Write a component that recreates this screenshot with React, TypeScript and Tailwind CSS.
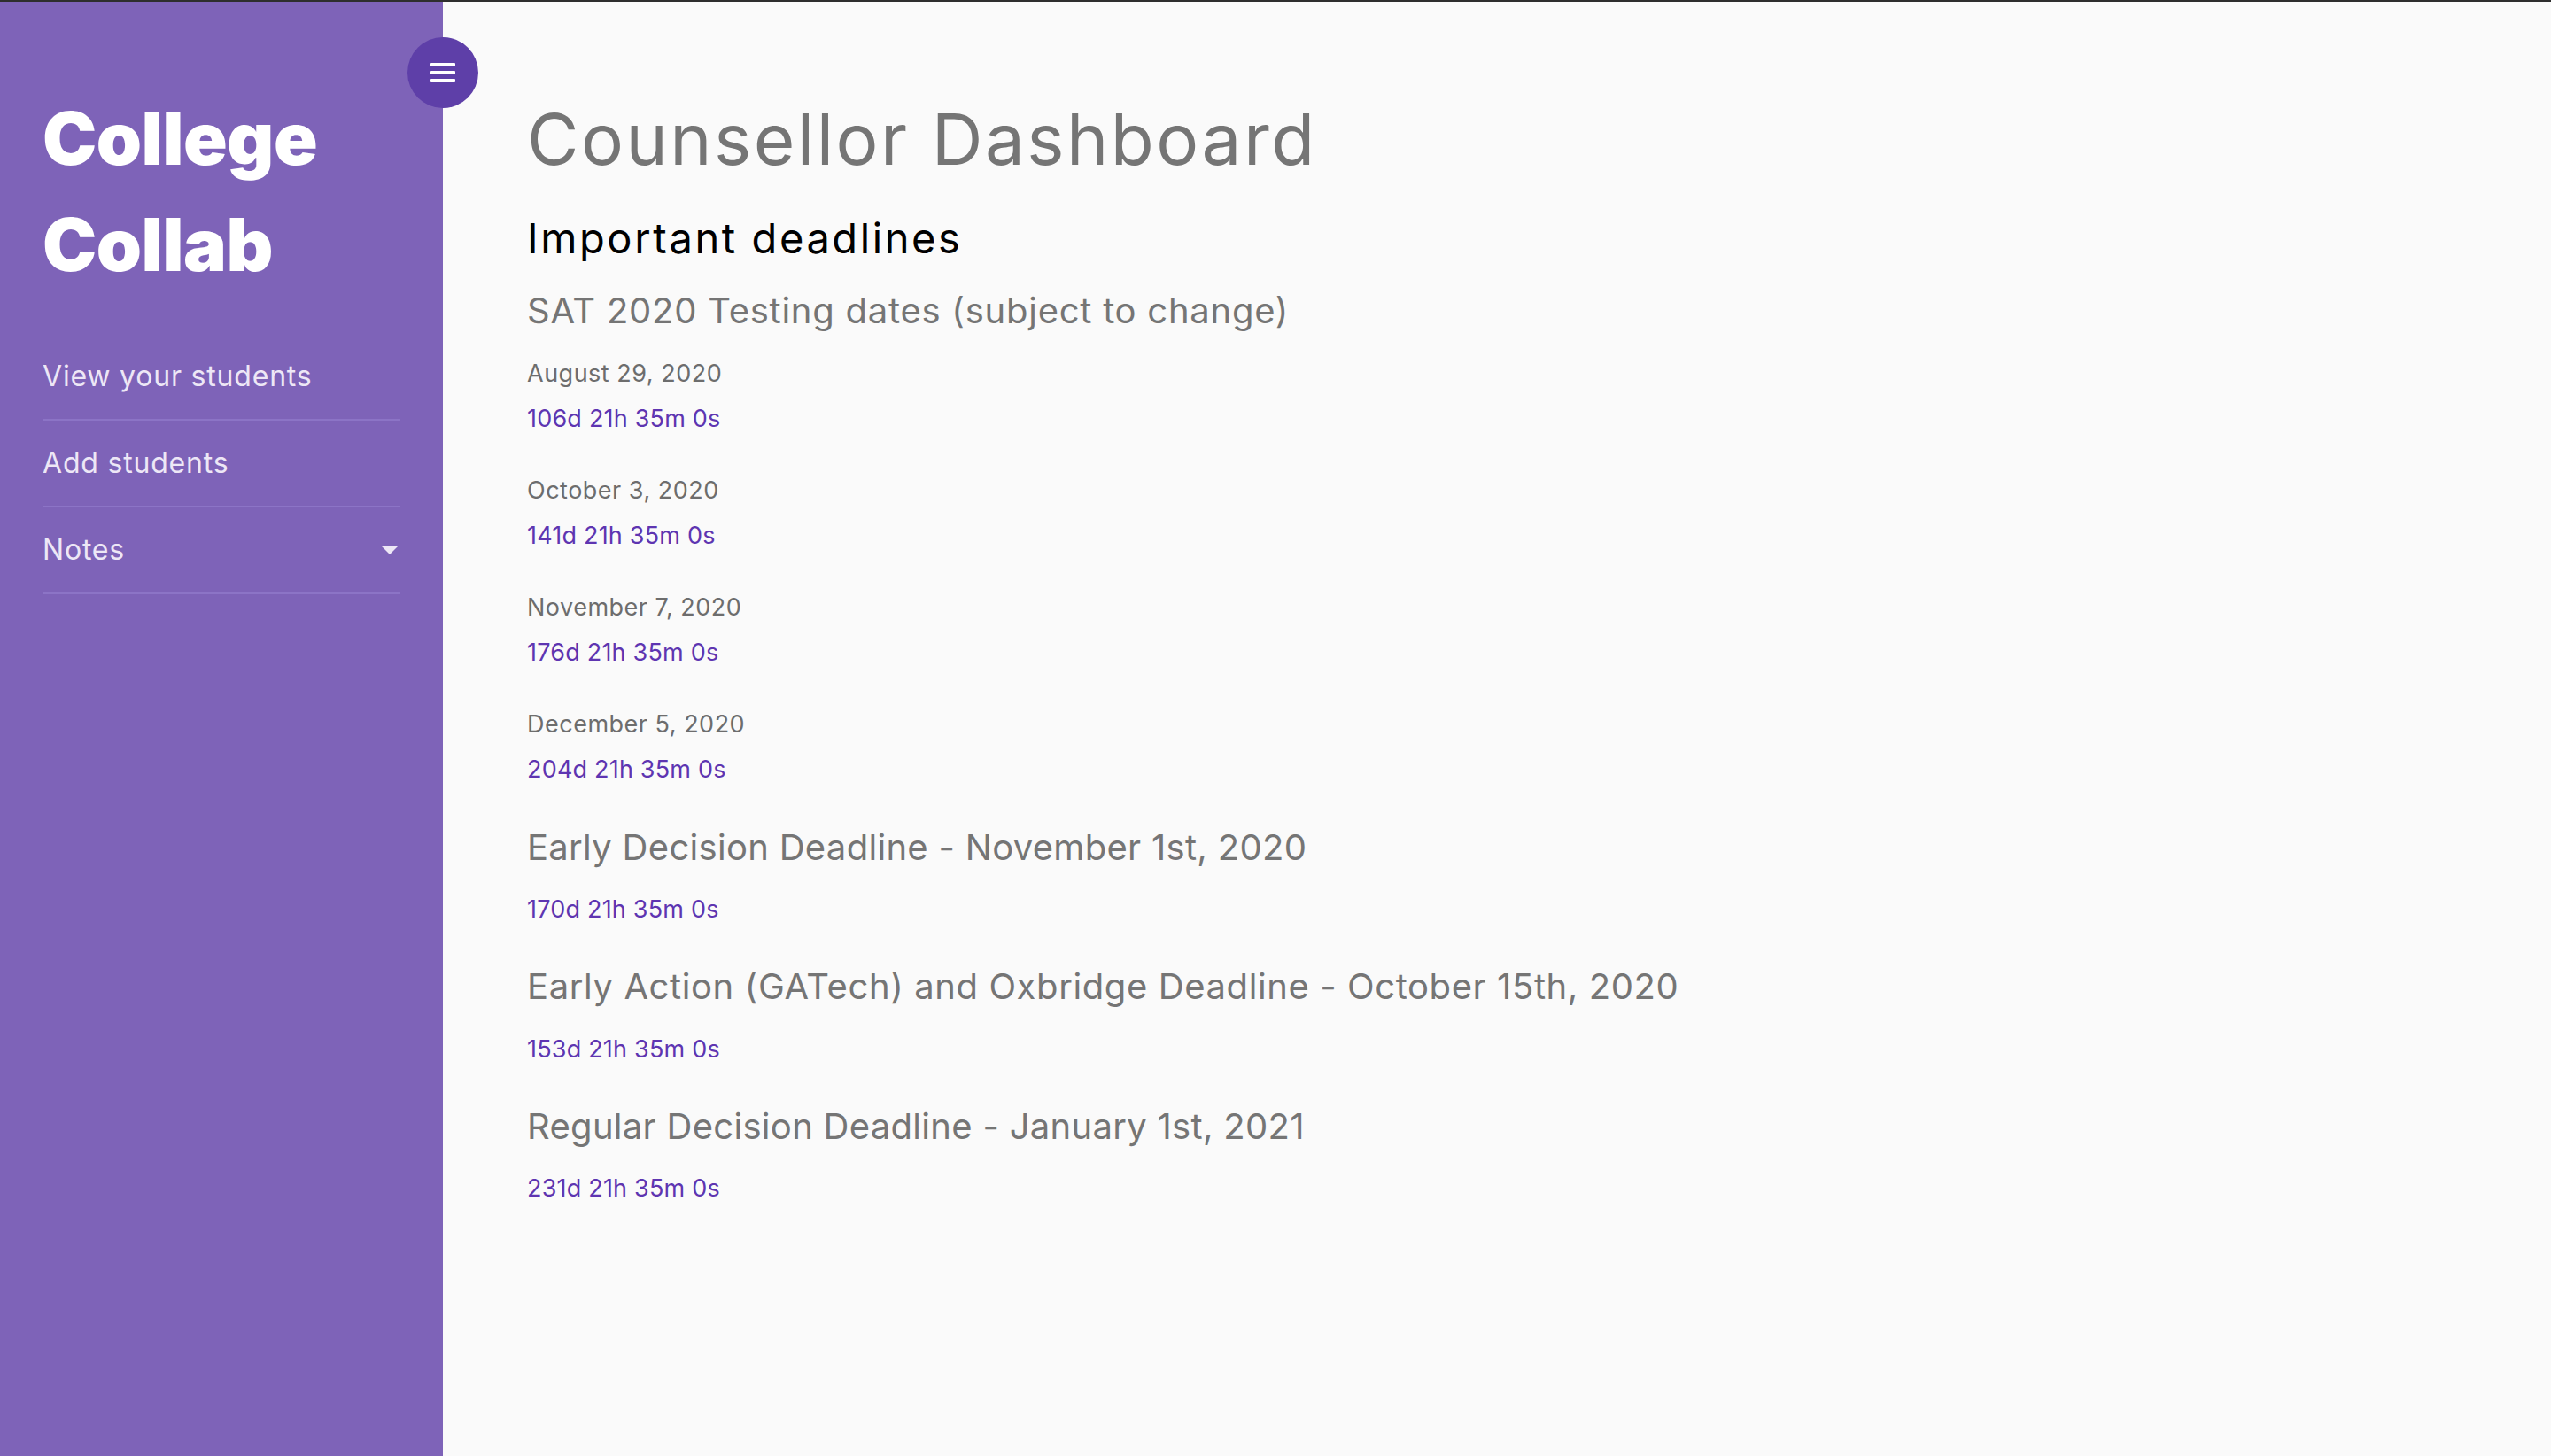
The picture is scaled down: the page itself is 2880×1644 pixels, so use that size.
import React from "react";

const font = { fontFamily: "Inter, 'Noto Sans', sans-serif" };

function Countdown({ children, mt }: { children: React.ReactNode; mt: string }) {
  return (
    <div className={`${mt} text-[27px] leading-[36px] text-[#5e35b1] tracking-[0.2px]`}>{children}</div>
  );
}

export default function App() {
  const dates = [
    ["August 29, 2020", "106d 21h 35m 0s"],
    ["October 3, 2020", "141d 21h 35m 0s"],
    ["November 7, 2020", "176d 21h 35m 0s"],
    ["December 5, 2020", "204d 21h 35m 0s"],
  ];
  return (
    <div className="flex flex-col w-full h-[1644px] overflow-hidden bg-[#fafafa]" style={font}>
      <div className="h-[2px] bg-[#2e2e2e] shrink-0" />
      <div className="flex flex-1 relative">
        <aside className="w-[500px] shrink-0 bg-[#7e63b8] pl-[48px] pr-[48px] pt-[95px]">
          <div className="text-white font-black text-[82px] leading-[120px] tracking-[-0.5px]">
            <div>College</div>
            <div>Collab</div>
          </div>
          <nav className="mt-[40px] flex flex-col text-[#ede7f6] text-[32px] tracking-[0.8px]">
            <div className="h-[98px] leading-[96px] border-b-2 border-[#8c74c6]">View your students</div>
            <div className="h-[98px] leading-[96px] border-b-2 border-[#8c74c6]">Add students</div>
            <div className="h-[98px] leading-[96px] border-b-2 border-[#8c74c6] flex items-center justify-between">
              <span>Notes</span>
              <svg width="20" height="10" viewBox="0 0 20 10" className="mr-[2px]">
                <path d="M0 0 L20 0 L10 10 Z" fill="#ede7f6" />
              </svg>
            </div>
          </nav>
        </aside>
        <button className="absolute left-[460px] top-[40px] w-[80px] h-[80px] rounded-full bg-[#5e3fa8] flex flex-col items-center justify-center gap-[5px]">
          <span className="block w-[28px] h-[4px] bg-white rounded-[1px]" />
          <span className="block w-[28px] h-[4px] bg-white rounded-[1px]" />
          <span className="block w-[28px] h-[4px] bg-white rounded-[1px]" />
        </button>
        <main className="flex-1 pl-[95px] pt-[107px]">
          <h1 className="text-[80px] leading-[96px] text-[#757575] font-normal tracking-[2.5px]">Counsellor Dashboard</h1>
          <h2 className="mt-[34px] text-[47px] leading-[60px] text-black font-normal tracking-[2.6px]">Important deadlines</h2>
          <h3 className="mt-[26px] text-[40px] leading-[52px] text-[#757575] tracking-[0.75px]">SAT 2020 Testing dates (subject to change)</h3>
          {dates.map(([d, c], i) => (
            <div key={d} className={i === 0 ? "mt-[27px]" : "mt-[45px]"}>
              <div className="text-[27px] leading-[36px] text-[#6d6d6d] tracking-[0.5px]">{d}</div>
              <Countdown mt="mt-[15px]">{c}</Countdown>
            </div>
          ))}
          <h3 className="mt-[44px] text-[40px] leading-[52px] text-[#757575] tracking-[0.3px]">Early Decision Deadline - November 1st, 2020</h3>
          <Countdown mt="mt-[26px]">170d 21h 35m 0s</Countdown>
          <h3 className="mt-[43px] text-[40px] leading-[52px] text-[#757575] tracking-[0.6px]">Early Action (GATech) and Oxbridge Deadline - October 15th, 2020</h3>
          <Countdown mt="mt-[27px]">153d 21h 35m 0s</Countdown>
          <h3 className="mt-[43px] text-[40px] leading-[52px] text-[#757575] tracking-[0.3px]">Regular Decision Deadline - January 1st, 2021</h3>
          <Countdown mt="mt-[26px]">231d 21h 35m 0s</Countdown>
        </main>
      </div>
    </div>
  );
}
